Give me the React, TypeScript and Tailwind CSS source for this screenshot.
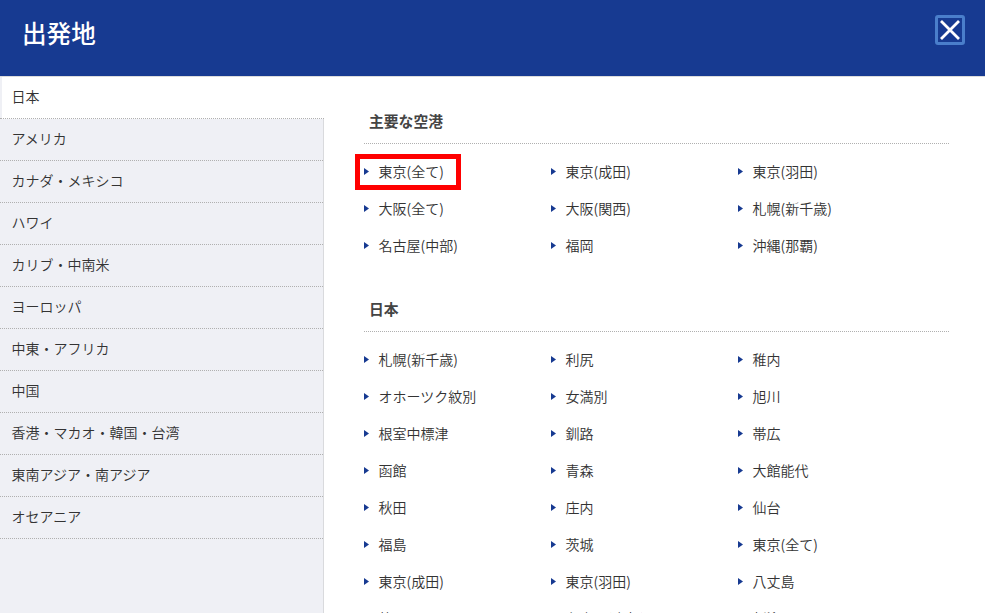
import { useState } from 'react'

const regions = [
    '日本',
    'アメリカ',
    'カナダ・メキシコ',
    'ハワイ',
    'カリブ・中南米',
    'ヨーロッパ',
    '中東・アフリカ',
    '中国',
    '香港・マカオ・韓国・台湾',
    '東南アジア・南アジア',
    'オセアニア',
]

const mainAirports = [
    '東京(全て)', '東京(成田)', '東京(羽田)',
    '大阪(全て)', '大阪(関西)', '札幌(新千歳)',
    '名古屋(中部)', '福岡', '沖縄(那覇)',
]

const japanAirports = [
    '札幌(新千歳)', '利尻', '稚内',
    'オホーツク紋別', '女満別', '旭川',
    '根室中標津', '釧路', '帯広',
    '函館', '青森', '大館能代',
    '秋田', '庄内', '仙台',
    '福島', '茨城', '東京(全て)',
    '東京(成田)', '東京(羽田)', '八丈島',
    '静岡', '名古屋(中部)', '新潟',
]

function AirportSection({ title, airports, highlighted }: { title: string; airports: string[]; highlighted?: string }) {
    return (
        <section className="mb-[23px]">
            <h2 className="h-[44px] border-b border-dotted border-[#b0b0b0] pl-[5px] text-[14.8px] leading-[42px] font-bold text-[#444444]">{title}</h2>
            <ul className="grid grid-cols-[187px_187px_187px] pt-[10px]">
                {airports.map((name) => (
                    <li key={name} className="relative flex h-[37px] items-center pb-[3px]">
                        <svg viewBox="0 0 5 7" className="mr-[9.5px] h-[7px] w-[5px]" fill="#173a91">
                            <path d="M0 0L5 3.5L0 7Z" />
                        </svg>
                        <a href="#">{name}</a>
                        {name === highlighted && (
                            <span className="absolute top-0 -left-[9px] h-[36px] w-[106px] border-[5px] border-[#ff0000]" />
                        )}
                    </li>
                ))}
            </ul>
        </section>
    )
}

export default function App() {
    const [region, setRegion] = useState('日本')

    return (
        <div className="flex h-screen flex-col overflow-hidden bg-white font-['Noto_Sans_CJK_JP',sans-serif] text-[14px] font-[350] text-[#333333]">
            <header className="flex h-[77px] shrink-0 items-start justify-between border-b border-[#dcdcdc] bg-[#173a91] pr-5 pl-[22px]">
                <h1 className="pt-[13px] text-[24.6px] leading-[38px] font-medium text-white">出発地</h1>
                <button aria-label="閉じる" className="mt-[15px] h-[30px] w-[30px] rounded-[3px] border-[3px] border-[#4a7ecb]">
                    <svg viewBox="0 0 24 24" className="h-6 w-6" fill="none" stroke="white" strokeWidth="2.8">
                        <path d="M3 3L21 21M21 3L3 21" />
                    </svg>
                </button>
            </header>
            <div className="flex min-h-0 flex-1">
                <nav className="w-[324px] shrink-0 bg-[linear-gradient(to_right,#eff0f5_323px,#d9dadd_323px)]">
                    {regions.map((name) => (
                        <button
                            key={name}
                            onClick={() => setRegion(name)}
                            className={
                                name === region
                                    ? 'block h-[42px] w-full border-b border-dotted border-[#b0b0b0] bg-[linear-gradient(to_right,#eff0f5_2px,white_2px)] pb-[3px] pl-[11.5px] text-left'
                                    : 'block h-[42px] w-[323px] border-b border-dotted border-[#b0b0b0] pb-[3px] pl-[11.5px] text-left'
                            }
                        >
                            {name}
                        </button>
                    ))}
                </nav>
                <main className="w-[625px] overflow-hidden pt-[23px] pl-10">
                    <AirportSection title="主要な空港" airports={mainAirports} highlighted="東京(全て)" />
                    <AirportSection title="日本" airports={japanAirports} />
                </main>
            </div>
        </div>
    )
}
